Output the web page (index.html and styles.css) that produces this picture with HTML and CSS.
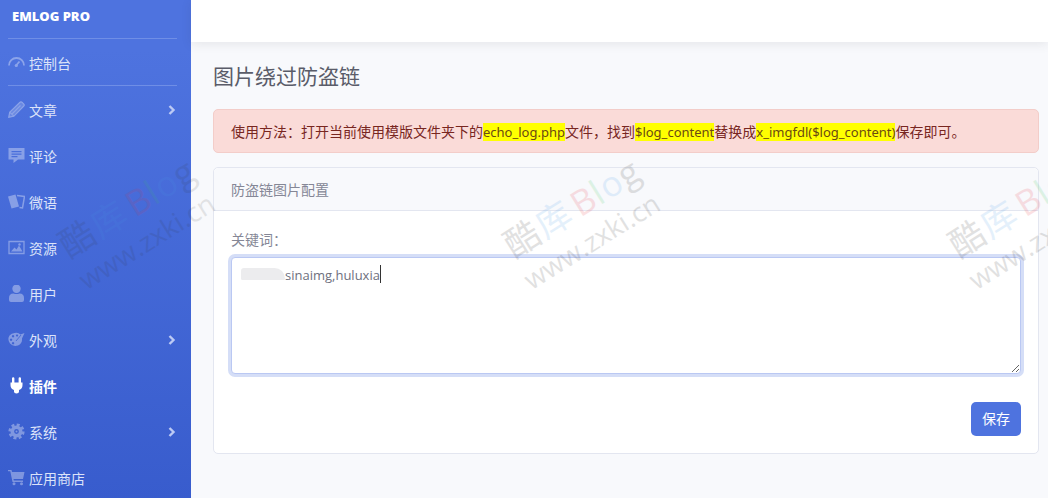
FILE: index.html
```
<!DOCTYPE html>
<html lang="zh-CN">
<head>
    <meta charset="UTF-8">
    <meta name="viewport" content="width=device-width, initial-scale=1.0">
    <title>EMLOG PRO</title>
    <link rel="stylesheet" href="styles.css">
</head>
<body>
    <div class="wrapper">
        <!-- Sidebar -->
        <nav class="sidebar">
            <a href="#" class="brand">EMLOG PRO</a>
            <hr class="divider">
            <a href="#" class="nav-link">
                <svg class="icon" viewBox="0 0 17 17"><path d="M1 11.500a7.500 7.500 0 0 1 15 0M8 11.500l3.500-4" fill="none" stroke="currentColor" stroke-width="1.800"/><circle cx="8.300" cy="11.500" r="1.600"/></svg>
                <span>控制台</span>
            </a>
            <hr class="divider">
            <a href="#" class="nav-link">
                <svg class="icon" viewBox="0 0 17 17"><path d="M.5 16.500l.9-5.500L11.800.9q1.200-1 2.300 0l1.900 1.900q1.100 1.200 0 2.300L6 15.500z" fill-opacity=".5"/><path d="M.8 16.200l.9-5L12 1.200q1-.8 1.900 0l1.900 1.900q.8 1 0 1.900L5.800 15.300zM1.800 11.200l4 4M4 13l8.500-8.500" fill="none" stroke="currentColor" stroke-width="1.200"/></svg>
                <span>文章</span>
                <svg class="arrow" viewBox="0 0 8 10"><path d="M1.500 1l4 4-4 4"/></svg>
            </a>
            <a href="#" class="nav-link">
                <svg class="icon" viewBox="0 0 17 17"><path fill-rule="evenodd" d="M.5 1h16v11.500H10L5.500 16v-3.500h-5zM3.500 4v1.200h10V4zm0 2.500v1.200h10V6.500zm0 2.500v1.200h6V9z"/></svg>
                <span>评论</span>
            </a>
            <a href="#" class="nav-link">
                <svg class="icon" viewBox="0 0 17 17"><path d="M0 3.500L7.500 1.500 11 13.500 3.500 15.500z"/><path d="M9 2.500l7.500 1-2 11.500-3-.5" fill="none" stroke="currentColor" stroke-width="1.500"/></svg>
                <span>微语</span>
            </a>
            <a href="#" class="nav-link">
                <svg class="icon" viewBox="0 0 17 17"><path d="M1 2.500h15v12H1z" fill="none" stroke="currentColor" stroke-width="1.300"/><path d="M3 12.500l3.500-4 2 2 2.500-4 3.500 6z"/><circle cx="11.500" cy="5.500" r="1.200"/></svg>
                <span>资源</span>
            </a>
            <a href="#" class="nav-link">
                <svg class="icon" viewBox="0 0 17 17"><circle cx="8.500" cy="3.800" r="4.200"/><path d="M1 15v-2q0-4.500 4.500-4.500 3 1.200 6 0Q16 8.500 16 13v2q0 2-2 2H3q-2 0-2-2z"/></svg>
                <span>用户</span>
            </a>
            <a href="#" class="nav-link">
                <svg class="icon" viewBox="0 0 17 17"><path fill-rule="evenodd" d="M6.500 2Q10 1 12.500 3.500L16.500 2 14 7.500q.5 5-4 7-5 1.500-8-2Q-1 8 1.500 4.500 3.500 2 6.500 2zM5 4a1.200 1.200 0 1 0 .1 0zM3 7.500a1.200 1.200 0 1 0 .1 0zM5 11a1.200 1.200 0 1 0 .1 0zM9 3.500a1 1 0 1 0 .1 0z"/><path d="M8 10l5-6" stroke="#3c61d0" stroke-width=".8"/></svg>
                <span>外观</span>
                <svg class="arrow" viewBox="0 0 8 10"><path d="M1.500 1l4 4-4 4"/></svg>
            </a>
            <a href="#" class="nav-link active">
                <svg class="icon" viewBox="0 0 17 17"><path d="M4 1.500Q4 .3 5.200.3t1.200 1.200v4h4.200v-4Q10.600.3 11.800.3T13 1.500v4h1.500V8q0 4-3.500 5v1.800q0 1.700-2.500 1.700T6 14.800V13Q2.500 12 2.500 8V5.500H4z"/></svg>
                <span>插件</span>
            </a>
            <a href="#" class="nav-link">
                <svg class="icon" viewBox="0 0 17 17"><circle cx="8.500" cy="8.500" r="6.800" fill="none" stroke="currentColor" stroke-width="2.600" stroke-dasharray="3 2.340"/><circle cx="8.500" cy="8.500" r="4.200" fill="none" stroke="currentColor" stroke-width="3.600"/><circle cx="8.500" cy="8.500" r="1"/></svg>
                <span>系统</span>
                <svg class="arrow" viewBox="0 0 8 10"><path d="M1.500 1l4 4-4 4"/></svg>
            </a>
            <a href="#" class="nav-link">
                <svg class="icon" viewBox="0 0 17 17"><path d="M0 1h3.500l.5 2h12.500L15 10H5.500l.3 1.500H15V13H4.500L2.300 2.300H0z"/><circle cx="6" cy="14.700" r="1.500"/><circle cx="13.500" cy="14.700" r="1.500"/></svg>
                <span>应用商店</span>
            </a>
        </nav>

        <!-- Content -->
        <div class="content">
            <header class="topbar"></header>
            <main class="page">
                <h1>图片绕过防盗链</h1>
                <div class="alert">使用方法：打开当前使用模版文件夹下的<mark>echo_log.php</mark>文件，找到<mark>$log_content</mark>替换成<mark>x_imgfdl($log_content)</mark>保存即可。</div>
                <div class="card">
                    <div class="card-header">防盗链图片配置</div>
                    <form class="card-body">
                        <label for="keywords">关键词：</label>
                        <div class="field">
                            <textarea id="keywords" name="keywords" spellcheck="false">sinaimg,huluxia</textarea>
                            <span class="smudge"></span>
                            <span class="caret"></span>
                        </div>
                        <button type="button" class="save-btn">保存</button>
                    </form>
                </div>
            </main>
        </div>

        <!-- Watermarks -->
        <svg class="watermark" width="1200" height="498" viewBox="0 0 1200 498" aria-hidden="true">
            <defs>
                <g id="mark">
                    <text class="mark-name" x="0" y="0"><tspan>酷</tspan><tspan class="blue" x="37">库</tspan><tspan class="red" x="78">B</tspan><tspan class="green" x="101">l</tspan><tspan class="blue" x="111">o</tspan><tspan x="133">g</tspan></text>
                    <text class="mark-url" x="-2" y="36">www.zxki.cn</text>
                </g>
            </defs>
            <use href="#mark" class="dim" transform="translate(69 259) rotate(-32)"/>
            <use href="#mark" transform="translate(514 259) rotate(-32)"/>
            <use href="#mark" transform="translate(959 259) rotate(-32)"/>
        </svg>
    </div>
</body>
</html>
```
FILE: styles.css
```
* {
    margin: 0;
    padding: 0;
    box-sizing: border-box;
}

body {
    font-family: "Open Sans", "Noto Sans CJK SC", sans-serif;
    font-size: 14px;
    line-height: 20px;
    color: #858796;
    background: #f8f9fc;
}

.wrapper {
    position: relative;
    display: flex;
    min-height: 100vh;
    overflow: hidden;
}

/* Sidebar */
.sidebar {
    width: 191px;
    flex-shrink: 0;
    background: linear-gradient(180deg, #4e73df 10%, #385ccd 100%);
}

.brand {
    display: block;
    height: 38px;
    padding: 6px 12px;
    font-size: 13px;
    font-weight: 800;
    color: #fff;
    text-decoration: none;
}

.divider {
    margin: 0 14px 0 8px;
    border: none;
    border-top: 1px solid #6f8ee6;
}

.nav-link {
    display: flex;
    align-items: center;
    gap: 4px;
    height: 46px;
    padding: 3px 15px 0 8px;
    color: #dce3f9;
    text-decoration: none;
}

.icon {
    width: 17px;
    height: 17px;
    margin-bottom: 2px;
    fill: currentColor;
    color: #fff;
    opacity: 0.35;
}

.arrow {
    width: 8px;
    height: 10px;
    margin-bottom: 2px;
    margin-left: auto;
    fill: none;
    stroke: #bccaf4;
    stroke-width: 2.4;
}

.nav-link.active {
    color: #fff;
    font-weight: bold;
}

.nav-link.active .icon {
    opacity: 1;
}

/* Content */
.content {
    flex: 1;
    min-width: 0;
}

.topbar {
    height: 42px;
    background: #fff;
    box-shadow: 0 2px 10px rgba(58, 59, 69, 0.1);
}

.page {
    padding: 20px 9px 20px 22px;
}

h1 {
    margin-bottom: 19px;
    font-size: 21px;
    font-weight: normal;
    line-height: 28px;
    color: #5a5c69;
}

.alert {
    margin-bottom: 14px;
    padding: 13px 17px 11px;
    line-height: 18px;
    color: #78261f;
    background: #fadbd8;
    border: 1px solid #f3cdc9;
    border-radius: 5px;
}

mark {
    font-family: "Noto Sans", sans-serif;
    font-size: 13px;
    color: #6b4a12;
    background: #ff0;
}

.card {
    background: #fff;
    border: 1px solid #e3e6f0;
    border-radius: 5px;
}

.card-header {
    padding: 12px 17px 10px;
    background: #f8f9fc;
    border-bottom: 1px solid #e3e6f0;
    border-radius: 5px 5px 0 0;
}

.card-body {
    display: flex;
    flex-direction: column;
    padding: 19px 17px 17px;
}

.field {
    position: relative;
    display: flex;
    margin: 7px 0 28px;
}

textarea {
    width: 100%;
    height: 117px;
    padding: 7px 9px;
    font: inherit;
    font-size: 13px;
    text-indent: 44px;
    color: #6e707e;
    background: #fff;
    border: 1px solid #bac8f3;
    border-radius: 4px;
    outline: none;
    box-shadow: 0 0 0 3px #d5def7;
    resize: vertical;
}

.smudge {
    position: absolute;
    top: 11px;
    left: 10px;
    width: 44px;
    height: 12px;
    background: #ececee;
    border-radius: 4px 14px 2px 2px;
}

.caret {
    position: absolute;
    top: 8px;
    left: 149px;
    width: 1px;
    height: 18px;
    background: #333;
}

.save-btn {
    align-self: flex-end;
    padding: 7px 11px;
    font: inherit;
    color: #fff;
    background: #4e73df;
    border: none;
    border-radius: 5px;
    cursor: pointer;
}

/* Watermarks */
.watermark {
    position: absolute;
    top: 0;
    left: 0;
    pointer-events: none;
    opacity: 0.14;
    fill: #333;
}

.mark-name {
    font-size: 35px;
}

.mark-url {
    font-size: 27px;
}

.dim {
    opacity: 0.8;
}

.blue {
    fill: #4a9be8;
}

.red {
    fill: #e8303c;
}

.green {
    fill: #3cc85a;
}
```
